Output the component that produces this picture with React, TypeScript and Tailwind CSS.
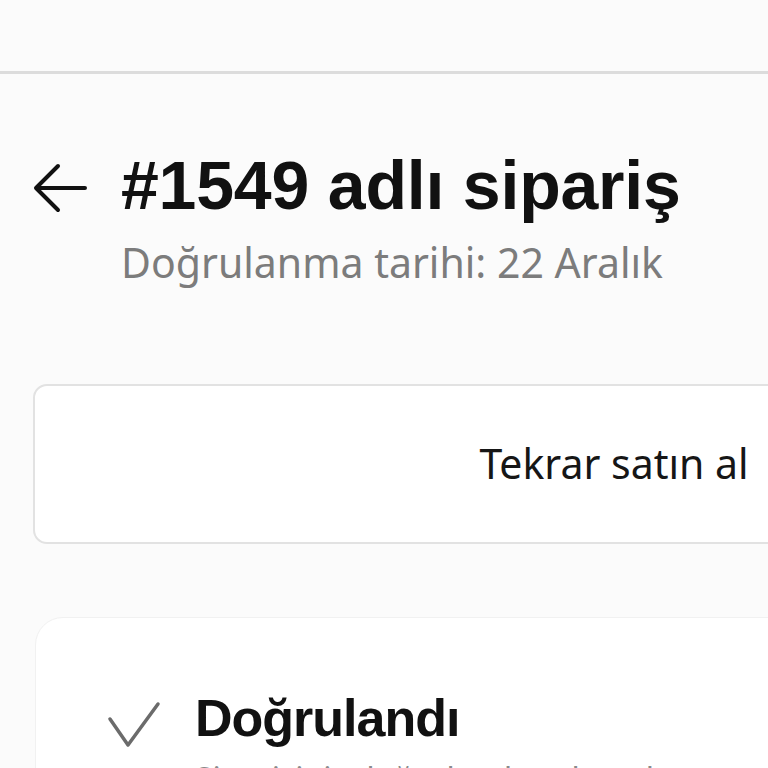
import React from 'react';

const BackArrow = () => (
  <svg width="54" height="50" viewBox="0 0 54 50" fill="none" className="shrink-0">
    <path d="M52 25H4M25 3L3 25L25 47" stroke="#111" strokeWidth="4" strokeLinecap="round" strokeLinejoin="round" />
  </svg>
);

const Check = () => (
  <svg width="54" height="48" viewBox="0 0 54 48" fill="none" className="shrink-0">
    <path d="M3 18L21 44L51 3" stroke="#6b6b6b" strokeWidth="3.5" strokeLinecap="round" strokeLinejoin="round" />
  </svg>
);

export default function App() {
  return (
    <div className="w-[768px] h-[768px] overflow-hidden bg-[#fbfbfb]">
      <header className="h-[74px] border-b-[3px] border-[#dcdcdc] bg-[#fbfbfb]" />
      <main className="w-[1228px] pl-[33px] pr-[33px]">
        <div className="flex items-start gap-[34px] pt-[78px]">
          <div className="pt-[11px]">
            <BackArrow />
          </div>
          <div>
            <h1 className="font-['Liberation_Sans',Arial,sans-serif] font-bold text-[68px] leading-[67px] text-[#111] tracking-[-0.2px]">
              #1549 adlı sipariş
            </h1>
            <p className="mt-[23px] font-['Noto_Sans',sans-serif] text-[41px] leading-[40px] text-[#7c7c7c]">
              Doğrulanma tarihi: 22 Aralık
            </p>
          </div>
        </div>

        <button className="mt-[102px] w-full h-[160px] rounded-[14px] border-2 border-[#e2e2e2] bg-white flex items-center justify-center">
          <span className="font-['Noto_Sans',sans-serif] text-[41px] text-[#161616]">
            Tekrar satın al
          </span>
        </button>

        <section className="mt-[73px] ml-[2px] rounded-[28px] bg-white border border-[#f1f1f1] pt-[74px] pl-[71px] pb-[40px]">
          <div className="flex items-start gap-[34px]">
            <div className="pt-[9px]">
              <Check />
            </div>
            <div>
              <h2 className="font-['Liberation_Sans',Arial,sans-serif] font-bold text-[52px] leading-[52px] text-[#111] tracking-[-1px]">
                Doğrulandı
              </h2>
              <p className="mt-[15px] font-['Noto_Sans',sans-serif] text-[32px] leading-[40px] text-[#8a8a8a]">
                Siparişiniz doğrulandı ve hazırlanıyor
              </p>
            </div>
          </div>
        </section>
      </main>
    </div>
  );
}
